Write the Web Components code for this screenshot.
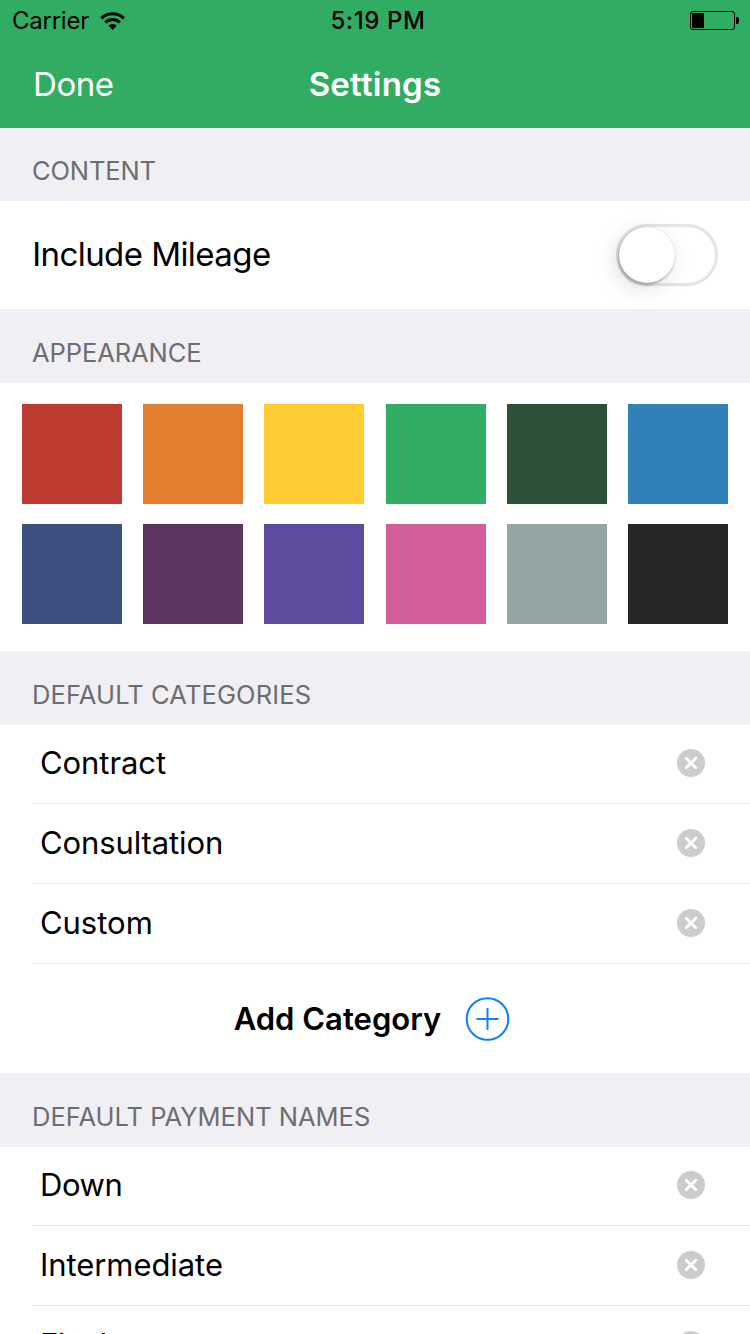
<!DOCTYPE html>
<html lang="en">
<head>
<meta charset="utf-8">
<title>Settings</title>
<style>
html, body { margin: 0; height: 1334px; overflow: hidden; }
body { background: #fff; color: #000; font-family: Inter, "Liberation Sans", sans-serif; }
</style>
</head>
<body>
<settings-screen></settings-screen>
<script>
const define = (name, html, setup) => {
  const template = document.createElement('template');
  template.innerHTML = html;
  customElements.define(name, class extends HTMLElement {
    constructor() {
      super();
      this.attachShadow({ mode: 'open' }).append(template.content.cloneNode(true));
    }
    connectedCallback() { if (setup) setup(this, this.shadowRoot); }
  });
};

define('status-bar', `
<style>
:host { display: grid; grid-template-columns: 1fr auto 1fr; align-items: center; height: 41px; font-size: 24px; line-height: 41px; }
.left { display: flex; align-items: center; padding-left: 12px; letter-spacing: -.24px; }
.left svg { margin-left: 11px; }
.time { font-weight: 500; letter-spacing: .62px; padding-left: 6px; }
.right { display: flex; justify-content: flex-end; padding-right: 11px; }
svg { display: block; }
</style>
<div class="left"><span>Carrier</span>
<svg width="25" height="18" viewBox="0 0 25 18"><g fill="none" stroke="#000" stroke-width="3.1"><path d="M1.4 6.3A16 16 0 0 1 23.8 6.3"/><path d="M5.4 10.5A10.2 10.2 0 0 1 19.8 10.5"/></g><path d="M8.5 13.6A5.8 5.8 0 0 1 16.7 13.6L12.6 17.9z"/></svg></div>
<div class="time">5:19 PM</div>
<div class="right"><svg width="49" height="19" viewBox="0 0 49 19"><rect x=".5" y=".5" width="44" height="18" rx="2.5" fill="none" stroke="#000"/><rect x="2" y="2" width="12" height="15" rx=".8"/><path d="M46 6h1a2 2 0 0 1 2 2v3a2 2 0 0 1-2 2h-1z"/></svg></div>`);

define('nav-bar', `
<style>
:host { display: grid; grid-template-columns: 1fr auto 1fr; height: 87px; line-height: 87px; font-size: 33px; color: #fff; }
.action { padding-left: 33.1px; letter-spacing: -.45px; }
.title { font-weight: 600; letter-spacing: .22px; }
</style>
<div class="action"><slot name="action"></slot></div><div class="title"><slot></slot></div><div></div>`);

define('section-header', `
<style>
:host { display: block; box-sizing: border-box; height: 74px; padding: 14px 0 0 32px; line-height: 60px; font-size: 25.5px; color: #6d6d72; background: #efeff4; letter-spacing: var(--track, 0); white-space: nowrap; }
:host([compact]) { height: 73px; padding-top: 13px; }
</style><slot></slot>`);

define('toggle-switch', `
<style>
:host { display: block; box-sizing: border-box; width: 102px; height: 62px; border: 3px solid #e5e5e5; border-radius: 31px; }
.knob { width: 56px; height: 56px; border-radius: 50%; background: #fff; box-shadow: 0 0 1px rgba(0,0,0,.25), -1px 2px 3px rgba(0,0,0,.25), -4px 5px 22px rgba(0,0,0,.13); }
</style><div class="knob"></div>`);

define('toggle-row', `
<style>
:host { display: flex; align-items: center; justify-content: space-between; box-sizing: border-box; height: 108px; padding: 0 32px 0 32.2px; font-size: 33px; }
.label { letter-spacing: -.56px; padding-bottom: 2px; }
</style><span class="label"><slot></slot></span><toggle-switch></toggle-switch>`);

define('color-palette', `
<style>
:host { display: grid; grid-template-columns: repeat(6, 100px); grid-auto-rows: 100px; row-gap: 20px; justify-content: space-between; box-sizing: border-box; height: 268px; padding: 21px 22px 0; }
</style>`, (host, root) => {
  for (const color of host.getAttribute('colors').split(' ')) {
    const swatch = document.createElement('div');
    swatch.style.background = color;
    root.append(swatch);
  }
});

define('item-row', `
<style>
:host { display: flex; align-items: center; justify-content: space-between; box-sizing: border-box; height: 80px; margin-left: 32px; padding: 0 45px 1px 7.9px; border-bottom: 1px solid #e9e9eb; font-size: 31px; line-height: 38px; letter-spacing: var(--track, 0); }
:host([first]) { height: 79px; padding-bottom: 2px; }
svg { display: block; }
</style><span><slot></slot></span>
<svg width="28" height="28" viewBox="0 0 28 28"><circle cx="14" cy="14" r="14" fill="#ccc"/><path d="M9.2 9.2l9.6 9.6M18.8 9.2l-9.6 9.6" stroke="#fff" stroke-width="2.8" stroke-linecap="round"/></svg>`);

define('add-row', `
<style>
:host { display: flex; align-items: center; box-sizing: border-box; height: 109px; padding-left: 233.7px; gap: 24px; font-size: 31px; font-weight: 600; }
svg { display: block; }
</style><span><slot></slot></span>
<svg width="45" height="44" viewBox="0 0 45 44" fill="none" stroke="#157efb"><circle cx="22.5" cy="22" r="20.8" stroke-width="2.1"/><path d="M11.5 22h22M22.5 11v22" stroke-width="2"/></svg>`);

define('settings-screen', `
<style>
:host { display: block; height: 1334px; overflow: hidden; }
header { background: #31ac63; height: 128px; }
</style>
<header><status-bar></status-bar><nav-bar><span slot="action">Done</span>Settings</nav-bar></header>
<section-header compact style="--track:-.15px">CONTENT</section-header>
<toggle-row>Include Mileage</toggle-row>
<section-header style="--track:-.07px">APPEARANCE</section-header>
<color-palette colors="#bc3a30 #e67e30 #ffcc33 #31ac63 #2d5136 #3081b9 #3c4f80 #5e355e #5e4ba0 #d35e9a #95a5a5 #262626"></color-palette>
<section-header style="--track:.12px">DEFAULT CATEGORIES</section-header>
<item-row first style="--track:-.05px">Contract</item-row>
<item-row style="--track:-.1px">Consultation</item-row>
<item-row style="--track:0px">Custom</item-row>
<add-row>Add Category</add-row>
<section-header>DEFAULT PAYMENT NAMES</section-header>
<item-row first style="--track:-.35px">Down</item-row>
<item-row style="--track:-.06px">Intermediate</item-row>
<item-row style="--track:-.4px">Final</item-row>`);
</script>
</body>
</html>
